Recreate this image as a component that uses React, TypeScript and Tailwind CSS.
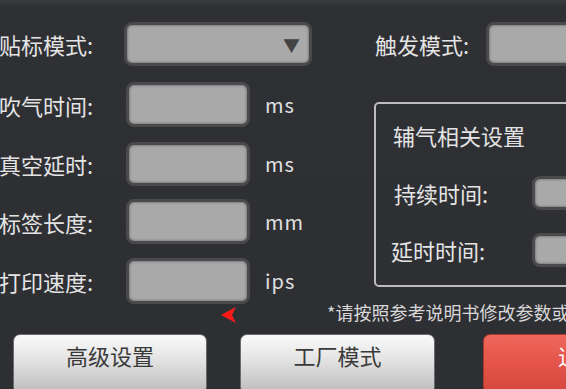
import React from "react";

const font = { fontFamily: '"Noto Sans CJK SC", "Noto Sans", sans-serif' };

function Field({ w, h = 45, children }: { w: number; h?: number; children?: React.ReactNode }) {
  return (
    <div
      className="shrink-0 rounded-[8px] border-[3px] border-[#4a4a4c] bg-[#a9a9a9] shadow-[inset_0_0_3px_rgba(0,0,0,0.5)] flex items-center justify-end"
      style={{ width: w, height: h }}
    >
      {children}
    </div>
  );
}

function Row({ label, unit, mt, h = 45, select }: { label: string; unit?: string; mt: number; h?: number; select?: boolean }) {
  return (
    <div className="flex items-center" style={{ marginTop: mt, height: h }}>
      <div className="w-[112px] -ml-[19px] text-right text-[22px] leading-none text-[#e4e4e4] shrink-0 whitespace-nowrap">{label}</div>
      {select ? (
        <div className="ml-[31px]">
          <Field w={188} h={h}>
            <span className="mr-[9px] text-[17px] text-[#444] leading-none">▼</span>
          </Field>
        </div>
      ) : (
        <div className="ml-[33px]">
          <Field w={124} h={h} />
        </div>
      )}
      {unit && <div className="ml-[15px] text-[20px] leading-none text-[#e0e0e0] tracking-[1px]">{unit}</div>}
    </div>
  );
}

export default function App() {
  return (
    <div
      className="relative w-[566px] h-[389px] overflow-hidden bg-[linear-gradient(#3b3c40_0px,#2f3034_7px,#2e2f33_100%)] flex flex-col"
      style={font}
    >
      <div className="flex h-[334px] shrink-0">
        <div className="w-[374px] shrink-0 flex flex-col pt-[22px]">
          <Row label="贴标模式:" mt={0} h={44} select />
          <Row label="吹气时间:" unit="ms" mt={16} h={45} />
          <Row label="真空延时:" unit="ms" mt={15} h={44} />
          <Row label="标签长度:" unit="mm" mt={13} h={45} />
          <Row label="打印速度:" unit="ips" mt={14} h={46} />
        </div>
        <div className="flex-1 flex flex-col pt-[22px] min-w-0">
          <div className="flex items-center h-[44px]">
            <div className="ml-[1px] w-[100px] text-[22px] leading-none text-[#e4e4e4] whitespace-nowrap">触发模式:</div>
            <div className="ml-[17px]">
              <Field w={120} h={44} />
            </div>
          </div>
          <div className="mt-[36px] h-[185px] w-[260px] shrink-0 rounded-[5px] border-2 border-[#bdbdbd] pl-[17px] pt-[19px] flex flex-col">
            <div className="text-[22px] leading-[24px] text-[#e4e4e4] whitespace-nowrap">辅气相关设置</div>
            <div className="flex items-center mt-[29px] h-[34px]">
              <div className="w-[140px] ml-[1px] text-[22px] leading-none text-[#e4e4e4] whitespace-nowrap">持续时间:</div>
              <Field w={100} h={34} />
            </div>
            <div className="flex items-center mt-[23px] h-[34px]">
              <div className="w-[141px] -ml-[2px] text-[22px] leading-none text-[#e4e4e4] whitespace-nowrap">延时时间:</div>
              <Field w={100} h={34} />
            </div>
          </div>
          <div className="mt-[15px] -ml-[47px] text-[18px] leading-[20px] text-[#d8d8d8] whitespace-nowrap">
            *请按照参考说明书修改参数或
          </div>
        </div>
      </div>
      <div className="flex pl-[13px] h-[60px] shrink-0">
        <button className="w-[194px] h-[60px] shrink-0 rounded-[7px] border border-[#6a6a6a] bg-[linear-gradient(#fafafa,#e2e2e2_45%,#bcbcbc)] text-[22px] leading-[26px] text-[#3a3a3a] flex justify-center pt-[7px]">
          高级设置
        </button>
        <button className="ml-[33px] w-[195px] h-[60px] shrink-0 rounded-[7px] border border-[#6a6a6a] bg-[linear-gradient(#fafafa,#e2e2e2_45%,#bcbcbc)] text-[22px] leading-[26px] text-[#3a3a3a] flex justify-center pt-[7px]">
          工厂模式
        </button>
        <button className="ml-[48px] w-[194px] h-[60px] shrink-0 rounded-[7px] border border-[#a8392f] bg-[linear-gradient(#f0675c,#e5554b_45%,#d4453b)] text-[22px] leading-[26px] text-white flex justify-center pt-[7px]">
          退出
        </button>
      </div>
      <svg className="absolute left-[220px] top-[305px]" width="18" height="19" viewBox="0 0 18 19">
        <path d="M1 10 L16 2 L12 10 L16 18 Z" fill="#ff1a1a" />
      </svg>
    </div>
  );
}
